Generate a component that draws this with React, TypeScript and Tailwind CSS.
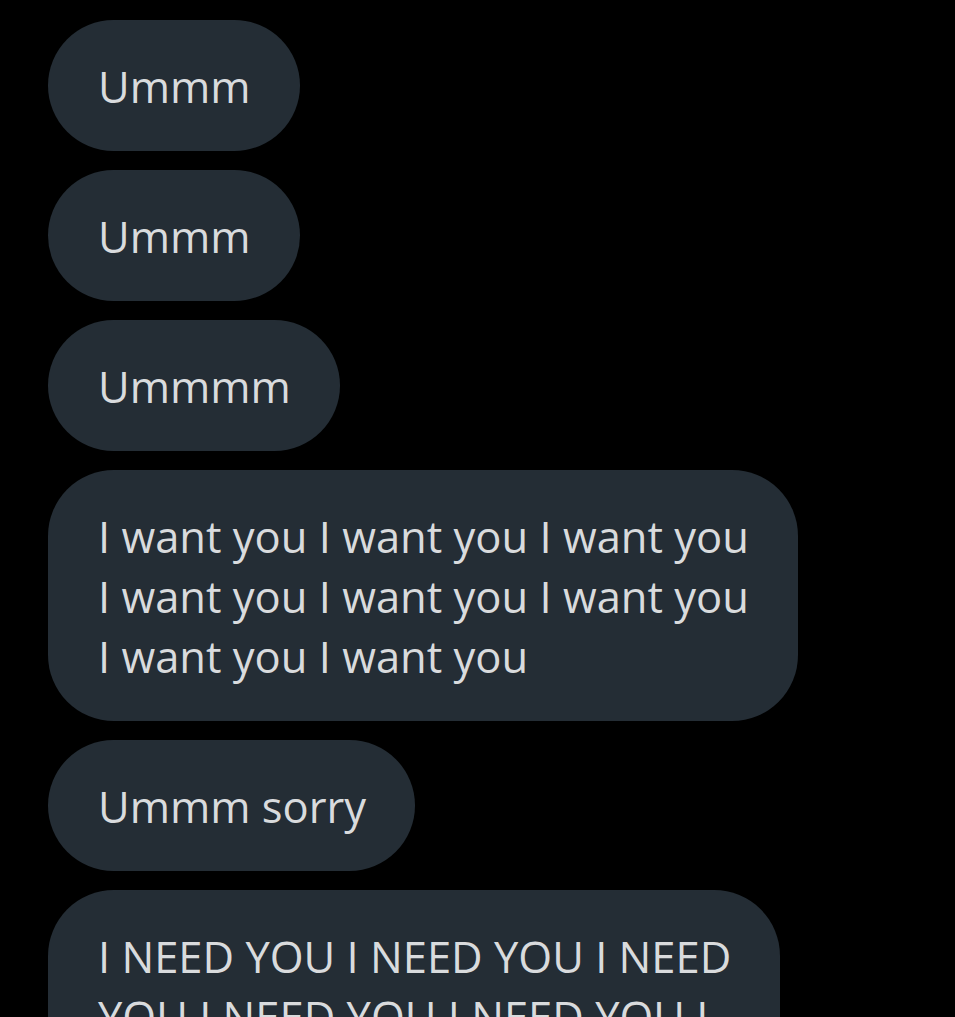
import React from "react";

const msgs: string[] = [
  "Ummm",
  "Ummm",
  "Ummmm",
  "I want you I want you I want you\nI want you I want you I want you\nI want you I want you",
  "Ummm sorry",
  "I NEED YOU I NEED YOU I NEED\nYOU I NEED YOU I NEED YOU I\nNEED YOU I NEED YOU",
];

export default function App() {
  return (
    <div className="w-[955px] h-[1017px] overflow-hidden bg-black pt-[20px] pl-[48px] flex flex-col items-start gap-[19px]" style={{ fontFamily: "'Open Sans', 'Noto Sans', sans-serif" }}>
      {msgs.map((m, i) => (
        <div
          key={i}
          className="bg-[#242d35] text-[#d9dbdd] rounded-[66px] pl-[50px] pr-[49px] pt-[37px] pb-[34px] text-[43.5px] leading-[60px] whitespace-pre"
        >
          {m}
        </div>
      ))}
    </div>
  );
}
